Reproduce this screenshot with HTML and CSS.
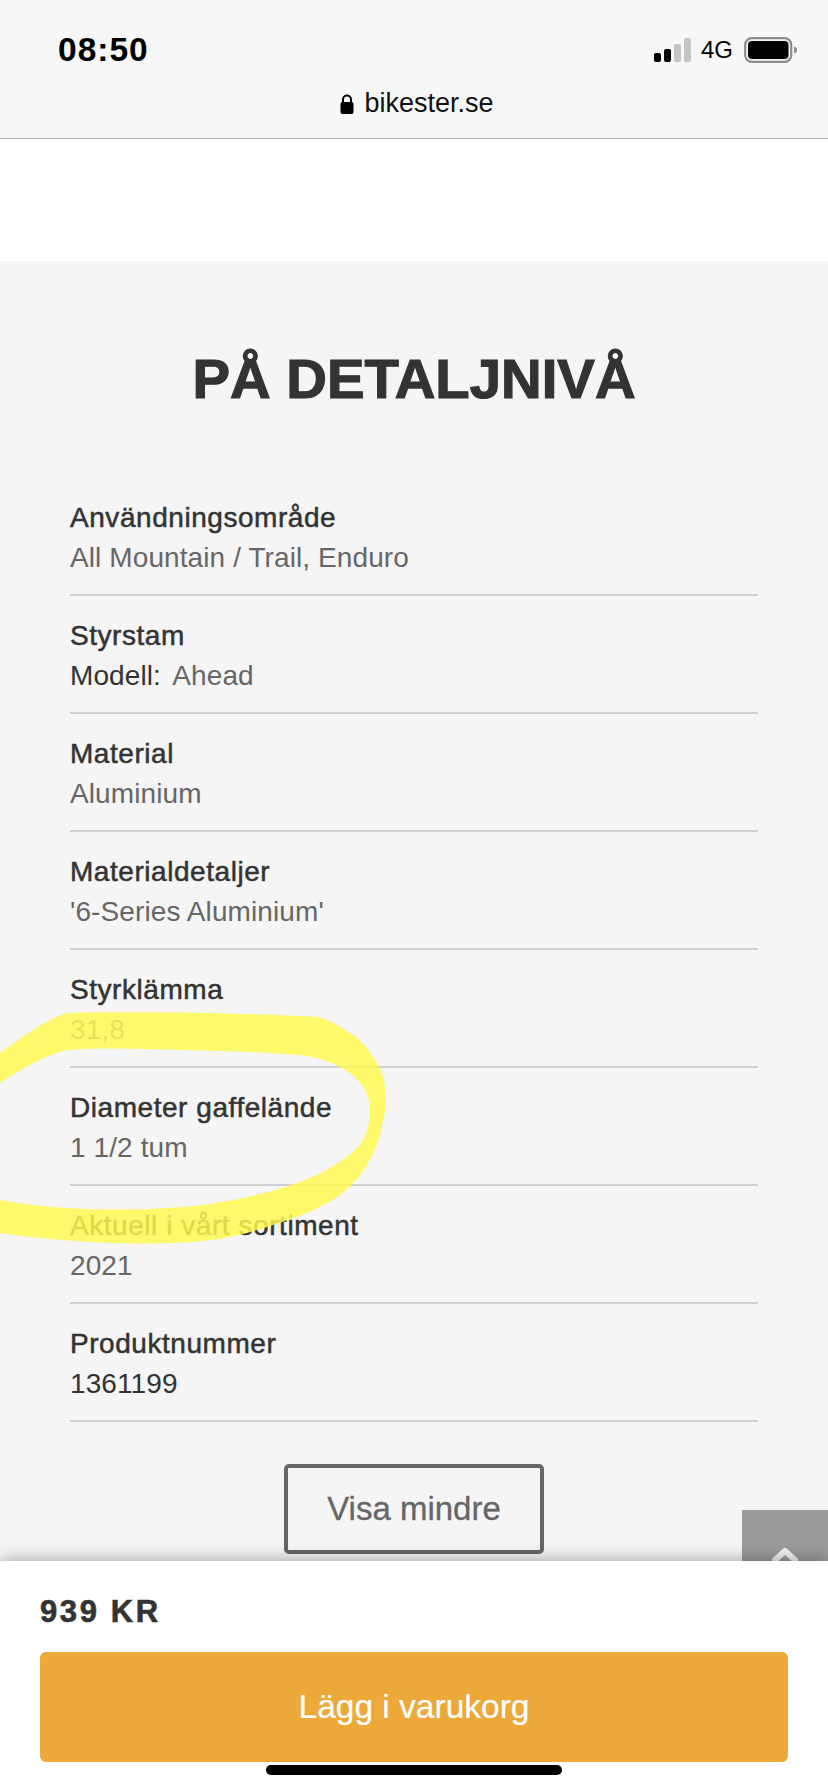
FILE: index.html
```html
<!DOCTYPE html>
<html lang="sv">
<head>
    <meta charset="UTF-8">
    <meta name="viewport" content="width=device-width, initial-scale=1.0">
    <title>bikester.se</title>
    <link rel="stylesheet" href="styles.css">
</head>
<body>

<div class="screen">
    <header class="browser-bar">
        <div class="status-row">
            <span class="clock">08:50</span>
            <div class="status-icons">
                <svg class="signal" width="38" height="24" viewBox="0 0 38 24">
                    <rect x="0" y="15" width="7" height="9" rx="2" fill="#000"/>
                    <rect x="10" y="11" width="7" height="13" rx="2" fill="#000"/>
                    <rect x="20" y="6" width="7" height="18" rx="2" fill="#c4c4c4"/>
                    <rect x="30" y="0" width="7" height="24" rx="2" fill="#c4c4c4"/>
                </svg>
                <span class="network">4G</span>
                <svg class="battery" width="54" height="26" viewBox="0 0 54 26">
                    <rect x="1.2" y="1.2" width="46" height="23.6" rx="6.5" fill="none" stroke="#8c8c8c" stroke-width="2.2"/>
                    <rect x="4" y="4" width="40.5" height="18" rx="4" fill="#000"/>
                    <path d="M50 9.5c2.2.6 3.2 2 3.2 3.5s-1 2.9-3.2 3.5z" fill="#8c8c8c"/>
                </svg>
            </div>
        </div>
        <div class="address">
            <svg class="lock" width="14" height="20" viewBox="0 0 14 20">
                <path d="M3 9V5.6a4 4 0 0 1 8 0V9" fill="none" stroke="#000" stroke-width="2"/>
                <rect x="0.5" y="8" width="13" height="12" rx="2" fill="#000"/>
            </svg>
            <span>bikester.se</span>
        </div>
    </header>

    <div class="white-gap"></div>

    <section class="details">
        <h1 class="details-title">PÅ DETALJNIVÅ</h1>
        <ul class="spec-list">
            <li class="spec"><div class="spec-name">Användningsområde</div><div class="spec-value">All Mountain / Trail, Enduro</div></li>
            <li class="spec"><div class="spec-name">Styrstam</div><div class="spec-value"><span class="spec-label">Modell:</span> Ahead</div></li>
            <li class="spec"><div class="spec-name">Material</div><div class="spec-value">Aluminium</div></li>
            <li class="spec"><div class="spec-name">Materialdetaljer</div><div class="spec-value">'6-Series Aluminium'</div></li>
            <li class="spec"><div class="spec-name">Styrklämma</div><div class="spec-value">31,8</div></li>
            <li class="spec"><div class="spec-name">Diameter gaffelände</div><div class="spec-value">1 1/2 tum</div></li>
            <li class="spec"><div class="spec-name">Aktuell i vårt sortiment</div><div class="spec-value">2021</div></li>
            <li class="spec"><div class="spec-name">Produktnummer</div><div class="spec-value spec-dark">1361199</div></li>
        </ul>
        <div class="more-wrap"><button class="more-btn">Visa mindre</button></div>
    </section>

    <svg class="marker" width="400" height="260" viewBox="0 1000 400 260">
        <path d="M0 1053C22 1038 44 1020 67 1013C130 1011 250 1013 317 1017C330 1020 340 1026 348 1032C358 1037 365 1045 370 1053C380 1066 385 1078 385 1090C386 1102 386 1110 383 1120C380 1138 375 1152 367 1165C358 1180 345 1192 333 1200C312 1212 290 1220 267 1227C235 1238 200 1243 167 1243C110 1245 50 1240 0 1233L0 1200C25 1204 45 1207 67 1208C100 1210 135 1210 167 1208C190 1207 212 1204 233 1200C265 1194 292 1186 317 1175C335 1166 350 1156 360 1145C367 1135 370 1122 370 1110C370 1095 362 1082 350 1073C335 1063 318 1057 300 1055C260 1052 225 1051 183 1050C145 1049 100 1047 67 1050C42 1056 20 1070 0 1083Z"/>
    </svg>

    <button class="to-top">
        <svg width="26" height="16" viewBox="0 0 26 16"><path d="M3 13L13 4L23 13" fill="none" stroke="#f2f2f2" stroke-width="6" stroke-linecap="round" stroke-linejoin="round"/></svg>
    </button>

    <div class="buy-bar">
        <div class="price">939 KR</div>
        <button class="buy-btn">Lägg i varukorg</button>
    </div>
    <div class="home-bar"></div>
</div>

</body>
</html>
```

FILE: styles.css
```css
* { box-sizing: border-box; }
body { margin: 0; font-family: "Liberation Sans", Arial, sans-serif; background: #fff; }
button { font-family: inherit; cursor: pointer; }

.screen { position: relative; width: 828px; height: 1792px; overflow: hidden; }

.browser-bar { height: 139px; background: #f7f7f7; border-bottom: 1px solid #b4b4b4; padding: 31px 30px 0 58px; }
.status-row { display: flex; justify-content: space-between; align-items: center; height: 38px; }
.clock { font-size: 33.5px; font-weight: bold; letter-spacing: 1px; color: #000; }
.status-icons { display: flex; align-items: center; }
.signal { margin-right: 9px; }
.network { font-size: 24px; color: #000; margin-right: 11px; }
.address { display: flex; justify-content: center; align-items: center; gap: 10px; margin: 19px 0 0 -22px; font-size: 27px; color: #111; }

.white-gap { height: 122px; background: #fff; }

.details { background: #f5f5f5; height: 1400px; padding: 83px 70px 0; }
.details-title { margin: 0 0 64px; text-align: center; font-size: 56.3px; line-height: 70px; font-weight: bold; color: #333; -webkit-text-stroke: 1.2px #333; }
.spec-list { list-style: none; margin: 0; padding: 0; }
.spec { height: 118px; padding-top: 20px; border-bottom: 2px solid #cfcfcf; font-size: 28px; line-height: 40px; }
.spec-name { color: #333; font-size: 28px; letter-spacing: .55px; -webkit-text-stroke: .5px #333; }
.spec-value { color: #666; letter-spacing: .1px; }
.spec-label { color: #333; margin-right: 5px; }
.spec-dark { color: #333; }

.more-wrap { display: flex; justify-content: center; margin-top: 42px; }
.more-btn { width: 260px; height: 90px; background: transparent; border: 4px solid #666; border-radius: 5px; color: #666; font-size: 33px; -webkit-text-stroke: .3px #666; }

.marker { position: absolute; left: 0; top: 1000px; }
.marker path { fill: #fff950; opacity: .84; }

.to-top { position: absolute; right: 0; top: 1510px; width: 86px; height: 60px; padding: 32px 0 0; border: 0; background: #9b9b9b; }

.buy-bar { position: absolute; left: 0; right: 0; bottom: 0; height: 231px; padding: 33px 40px 0; background: #fff; box-shadow: 0 -3px 14px rgba(0,0,0,.28); }
.price { font-size: 31px; font-weight: bold; letter-spacing: 2.6px; color: #333; line-height: 36px; -webkit-text-stroke: .6px #333; }
.buy-btn { display: block; width: 100%; height: 110px; margin-top: 22px; border: 0; border-radius: 6px; background: #eca838; color: #fff; font-size: 33.5px; -webkit-text-stroke: .2px #fff; }
.home-bar { position: absolute; left: 266px; bottom: 17px; width: 296px; height: 10px; border-radius: 5px; background: #000; }
```
